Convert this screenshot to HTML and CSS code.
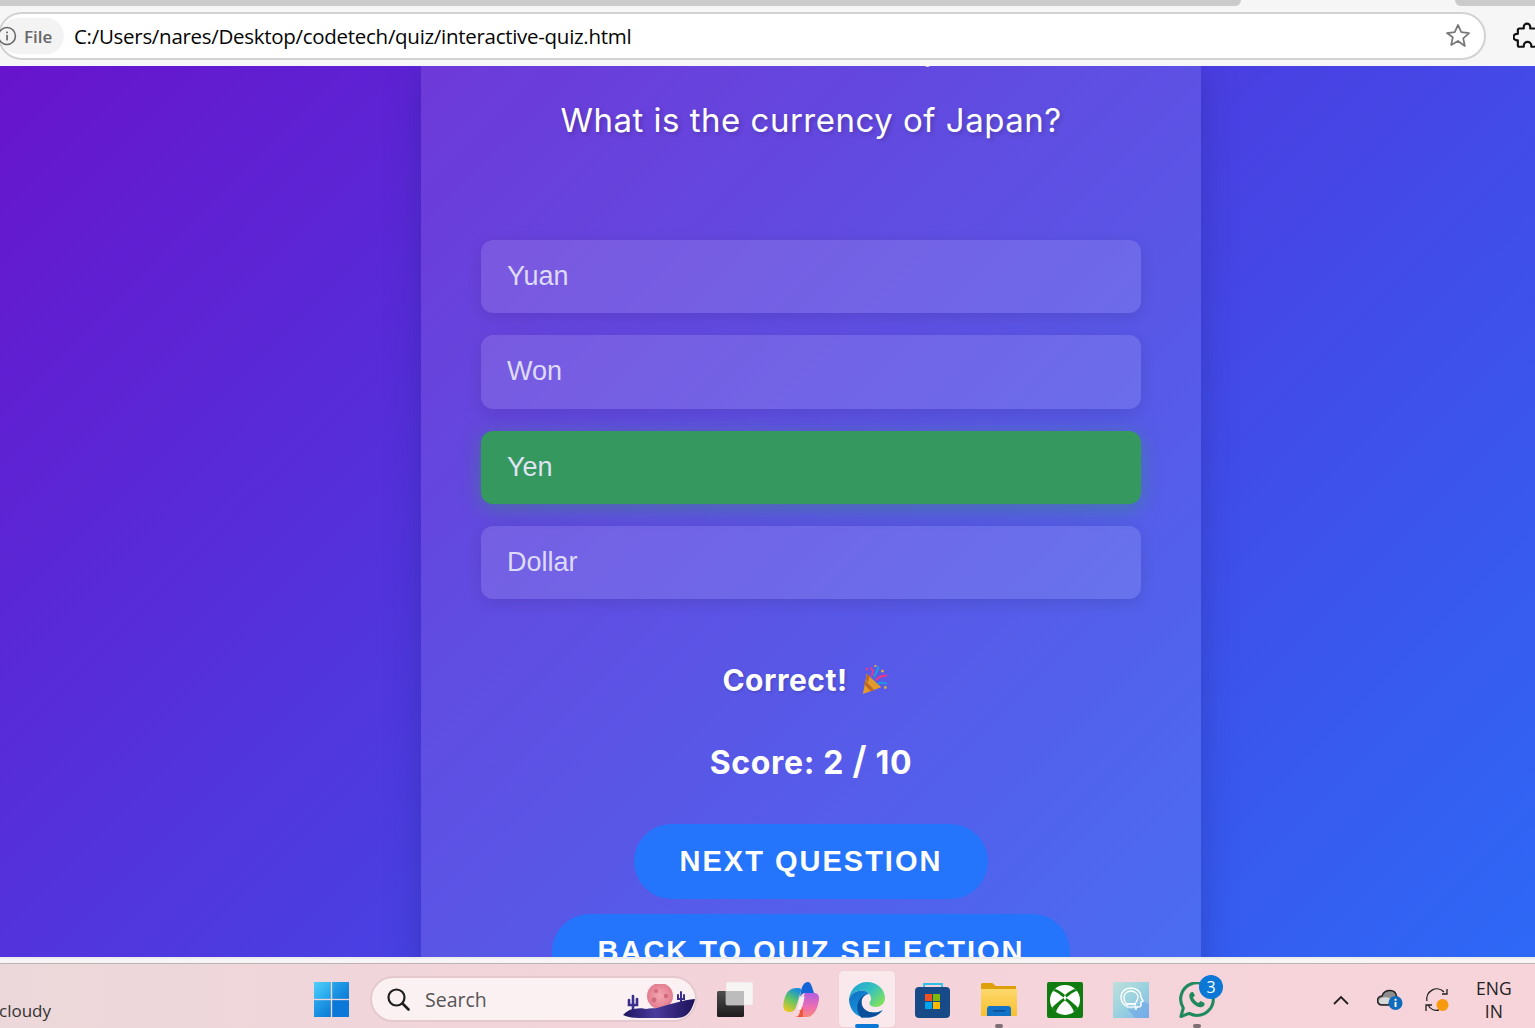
FILE: index.html
```html
<!DOCTYPE html>
<html lang="en">
<head>
<meta charset="utf-8">
<title>Interactive Quiz</title>
<link rel="stylesheet" href="styles.css">
</head>
<body>
<div class="screen">
  <header class="browser">
    <div class="tabstrip"><span class="tab-a"></span><span class="tab-b"></span></div>
    <div class="toolbar">
      <div class="omnibox">
        <div class="chip">
          <svg class="info" viewBox="0 0 18 18"><circle cx="9" cy="9" r="7.6" fill="none" stroke="#666" stroke-width="1.4"/><rect x="8.3" y="8" width="1.5" height="5" fill="#666"/><rect x="8.3" y="5" width="1.5" height="1.6" fill="#666"/></svg>
          <span class="chip-text">File</span>
        </div>
        <span class="url">C:/Users/nares/Desktop/codetech/quiz/interactive-quiz.html</span>
        <svg class="star" viewBox="0 0 24 24"><path d="M12 1.8l3 6.7 7.2.8-5.4 4.8 1.5 7.1L12 16.6l-6.3 3.6 1.5-7.1L1.8 9.300l7.200-.8z" fill="none" stroke="#777" stroke-width="1.600" stroke-linejoin="round"/></svg>
      </div>
      <svg class="puzzle" viewBox="0 0 26 26"><path d="M10 4.500a3 3 0 0 1 6 0V6h5a1.500 1.500 0 0 1 1.500 1.500V11H24a3 3 0 0 1 0 6h-1.500v4.500A1.500 1.500 0 0 1 21 23h-4v-1a3.500 3.500 0 0 0-7 0v1H6a1.500 1.500 0 0 1-1.500-1.500V17H3.500a3 3 0 0 1 0-6h1V7.500A1.500 1.500 0 0 1 6 6h4z" fill="none" stroke="#111" stroke-width="2" stroke-linejoin="round"/></svg>
    </div>
  </header>

  <main class="page">
    <section class="card">
      <span class="clipped-mark"></span>
      <h2 class="question">What is the currency of Japan?</h2>
      <div class="options">
        <div class="option">Yuan</div>
        <div class="option">Won</div>
        <div class="option option-correct">Yen</div>
        <div class="option">Dollar</div>
      </div>
      <p class="feedback">Correct!
        <svg class="popper" viewBox="0 0 30 30">
          <path d="M7 9l15 14L3 30z" fill="#e39a2c"/>
          <path d="M5.500 16l9.500 10-3.500 1.400-7.300-7.400zM7 9l3 3-2 6-2-3z" fill="#b96a2a"/>
          <path d="M12 11c2-3 1-6-.5-8" fill="none" stroke="#e8388f" stroke-width="2" stroke-linecap="round"/>
          <path d="M15 12c1-4 3-5 4-10" fill="none" stroke="#1e9be0" stroke-width="2.200" stroke-linecap="round"/>
          <path d="M17 15c3-3 6-4 10-4" fill="none" stroke="#e8388f" stroke-width="2.200" stroke-linecap="round"/>
          <path d="M19 19c3-1 5-1 8 0" fill="none" stroke="#1e9be0" stroke-width="2" stroke-linecap="round"/>
          <rect x="6" y="3" width="2.500" height="2.500" fill="#e8388f"/><rect x="22" y="5" width="2.500" height="2.500" fill="#e9b02c"/><rect x="25" y="22" width="2.500" height="2.500" fill="#e9b02c"/><rect x="15" y="0" width="2" height="2" fill="#e9b02c"/>
        </svg>
      </p>
      <p class="score">Score: 2 <span class="slash">/</span> 10</p>
      <button class="action action-next">NEXT QUESTION</button>
      <button class="action action-back">BACK TO QUIZ SELECTION</button>
    </section>
  </main>

  <div class="strip"></div>

  <footer class="taskbar">
    <span class="weather">cloudy</span>
    <svg class="winlogo" viewBox="0 0 36 36">
      <defs>
        <linearGradient id="wa" x1="0" y1="0" x2="1" y2="1"><stop offset="0" stop-color="#52cffb"/><stop offset="1" stop-color="#1d9fe8"/></linearGradient>
        <linearGradient id="wb" x1="0" y1="0" x2="1" y2="1"><stop offset="0" stop-color="#2aa6ec"/><stop offset="1" stop-color="#0a7ad6"/></linearGradient>
      </defs>
      <rect width="17.300" height="17.300" fill="url(#wa)"/><rect x="18.700" width="17.300" height="17.300" fill="url(#wb)"/><rect y="18.700" width="17.300" height="17.300" fill="url(#wb)"/><rect x="18.700" y="18.700" width="17.300" height="17.300" fill="#0a78d8"/>
    </svg>
    <div class="search">
      <svg class="lens" viewBox="0 0 24 24"><circle cx="10.500" cy="10.500" r="8" fill="none" stroke="#1f1f1f" stroke-width="2.200"/><path d="M16.500 16.500l6 6" stroke="#1f1f1f" stroke-width="2.600" stroke-linecap="round"/></svg>
      <span class="search-text">Search</span>
      <svg class="search-art" viewBox="0 0 76 38">
        <defs><linearGradient id="hill" x1="0" y1="0" x2="1" y2="0"><stop offset="0" stop-color="#1e1660"/><stop offset=".45" stop-color="#4a3a9c"/><stop offset="1" stop-color="#1c1258"/></linearGradient>
        <radialGradient id="moon"><stop offset="0" stop-color="#f4a8b2"/><stop offset="1" stop-color="#e27c8e"/></radialGradient></defs>
        <circle cx="39" cy="12" r="13" fill="url(#moon)"/>
        <circle cx="35" cy="7" r="2" fill="#cf6b80"/><circle cx="45" cy="12" r="2.200" fill="#cf6b80"/><circle cx="33" cy="16" r="2.400" fill="#cf6b80"/>
        <path d="M12 26V12M8 16v5h8v-6" fill="none" stroke="#3a2e8c" stroke-width="2.600" stroke-linecap="round"/>
        <path d="M60 8v10M57 11v4h6v-4" fill="none" stroke="#3a2e8c" stroke-width="2" stroke-linecap="round"/>
        <path d="M2 31c3-3 7-6 11-6 4-1 9-1 12 0 4-1 8-.5 11-1 14-4 26-8 38-9-2 8-5 14-10 17-2 1-5 2-9 2H18c-7 0-12-1-16-3z" fill="url(#hill)"/>
      </svg>
    </div>
    <div class="apps">
      <div class="app">
        <svg viewBox="0 0 36 36"><defs><linearGradient id="tv" x1="0" y1="0" x2="0" y2="1"><stop offset="0" stop-color="#4e4e4e"/><stop offset="1" stop-color="#1c1c1c"/></linearGradient></defs><rect x="0" y="9" width="27" height="26" rx="1.500" fill="url(#tv)"/><rect x="9" y="0" width="27" height="23" rx="1.500" fill="#f7f4f4" stroke="#eadfe0" stroke-width=".6"/><rect x="9" y="9" width="18" height="14" fill="#bdbcbc"/></svg>
      </div>
      <div class="app">
        <svg viewBox="0 0 36 36"><defs>
          <linearGradient id="ca" x1=".6" y1="0" x2=".2" y2="1"><stop offset="0" stop-color="#1a8fd8"/><stop offset=".45" stop-color="#5cc46a"/><stop offset="1" stop-color="#f2c81c"/></linearGradient>
          <linearGradient id="cb" x1=".5" y1="0" x2=".5" y2="1"><stop offset="0" stop-color="#b35ee0"/><stop offset=".6" stop-color="#ee6fb0"/><stop offset="1" stop-color="#f58a7a"/></linearGradient>
        </defs>
          <path d="M18 9C19 4 21 0 25 0c2 0 3 2 4 5l2 6h-9c-2 0-4 2-5 4z" fill="#1565d8"/>
          <path d="M14 6C8 6 4 9 2 15c-2 6-2 10-1 12 1 3 4 3 6 3 3 0 5-2 6-5l5-16c1-3-2-3-4-3z" fill="url(#ca)"/>
          <path d="M22 11h9c3 0 5 2 5 5 0 6-3 14-7 17-2 2-4 2-7 2H12c3 0 5-2 6-5l3-12c.5-4 0-7 1-7z" fill="url(#cb)"/>
          <path d="M15 23c3 0 5 2 5 5v7h-8c3 0 4-2 5-5z" fill="#f0573c"/>
          <path d="M17 15h4.500L18 28h-4z" fill="#fbeef0"/>
        </svg>
      </div>
      <div class="app app-active">
        <svg viewBox="0 0 36 36"><defs>
          <linearGradient id="ea" x1="0" y1="0" x2="1" y2=".7"><stop offset="0" stop-color="#1c9fd8"/><stop offset=".55" stop-color="#35c1c0"/><stop offset="1" stop-color="#7fe05e"/></linearGradient>
          <linearGradient id="eb" x1="0" y1="0" x2=".6" y2="1"><stop offset="0" stop-color="#0f6fc4"/><stop offset="1" stop-color="#1b9de2"/></linearGradient>
        </defs>
          <path d="M0 17C1 7 9 0 18 0c10 0 18 7 18 16 0 6-5 9-9 9-3 0-6-1-6.500-3-.3-2 1.500-2.500 1.500-5.500 0-4-4-8-9-8C7 8.500 2 12 0 17z" fill="url(#ea)"/>
          <path d="M0 17c2-5 7-8.500 13-8.500 3 0 5.500 1.500 7 3.500-4 .5-7.500 3.500-7.500 8 0 6 5 10.500 12 10.500 3.500 0 6.500-.5 9-2.500-3 5-9 7.500-16 7.500C7 36 0 27 0 17z" fill="url(#eb)"/>
          <path d="M13 36c-6-5-6-14-2-19 1-2 4-4.500 9-5-4 .5-7.500 3.500-7.500 8 0 6 5 10.500 12 10.500 3.500 0 6.500-.5 9-2.500-3 5-9 7.500-16 7.500-1.600 0-3-.2-4.500.5z" fill="#0b4f9c"/>
        </svg>
        <span class="active-bar"></span>
      </div>
      <div class="app">
        <svg viewBox="0 0 36 36"><path d="M9 8V2h18v6" fill="none" stroke="#2fc0e8" stroke-width="1.800"/><rect x="0" y="5" width="35" height="31" rx="4" fill="#174a86"/><rect x="10" y="12" width="7" height="7" fill="#f25022"/><rect x="18" y="12" width="7" height="7" fill="#7fba00"/><rect x="10" y="20" width="7" height="7" fill="#00a4ef"/><rect x="18" y="20" width="7" height="7" fill="#ffb900"/></svg>
      </div>
      <div class="app">
        <svg viewBox="0 0 36 36"><defs><linearGradient id="fo" x1="0" y1="0" x2="0" y2="1"><stop offset="0" stop-color="#fcd86c"/><stop offset="1" stop-color="#f8bf2c"/></linearGradient></defs><path d="M0 2.500C0 1.500 1 1 2 1h9c1 0 3 3 4 3h20v3H0z" fill="#dd9f0a"/><path d="M0 7h36v27H0z" fill="url(#fo)"/><path d="M6 34v-7c0-2 1-3 3-3h18c2 0 3 1 3 3v7z" fill="#1173c8"/><rect x="12" y="28" width="12" height="1.600" fill="#0b4f94"/></svg>
        <span class="running-dot"></span>
      </div>
      <div class="app">
        <svg viewBox="0 0 36 36">
          <rect width="36" height="36" rx="2" fill="#107c10"/>
          <circle cx="18" cy="18" r="15" fill="#fff"/>
          <g fill="#107c10">
            <path d="M18 13C15 10.500 11 7.500 8 7L6 9C9 9 13 13 16.500 15.500z"/>
            <path d="M16.500 16C11 20 7 23 5 26L9 30.500C10 26 14 21 18 18.500z"/>
          </g>
          <g fill="#107c10" transform="translate(36 0) scale(-1 1)">
            <path d="M18 13C15 10.500 11 7.500 8 7L6 9C9 9 13 13 16.500 15.500z"/>
            <path d="M16.500 16C11 20 7 23 5 26L9 30.500C10 26 14 21 18 18.500z"/>
          </g>
        </svg>
      </div>
      <div class="app">
        <svg viewBox="0 0 36 36"><defs><linearGradient id="gh" x1="0" y1="0" x2="1" y2="1"><stop offset="0" stop-color="#bfe0dc"/><stop offset=".5" stop-color="#9ad2df"/><stop offset="1" stop-color="#7fb6ec"/></linearGradient></defs><rect width="36" height="36" fill="url(#gh)"/><path d="M14 27l9 9h13V22l-7-3-6 9z" fill="#6fa7e6" opacity=".6"/><path d="M13 24c-3-2-5-5-5-9 0-5 4-9 10-9s10 4 10 9c0 1 2 3 2 4l-2 1v3c0 1-1 2-3 2h-2v3" fill="none" stroke="#fff" stroke-width="1.500"/><path d="M14 22c-2-1-3-4-3-7 0-3 3-6 7-6s7 3 7 6-2 5-3 7z" fill="none" stroke="#fff" stroke-width="1.300"/><rect x="14" y="22" width="8" height="3" fill="none" stroke="#fff" stroke-width="1.200"/></svg>
      </div>
      <div class="app">
        <svg viewBox="0 0 36 36"><path d="M1.500 36l2.400-8.700A16.800 16.800 0 1 1 18 35a16.800 16.800 0 0 1-8-2.100z" transform="translate(.5 -.500) scale(.97)" fill="none" stroke="#1f8a5d" stroke-width="3.200" stroke-linejoin="round"/><path d="M13 10c-1 0-2 1-2.500 2.500-.8 2.500.5 6 3.500 9s6.500 4.300 9 3.500c1.500-.5 2.500-1.500 2.500-2.500v-1.500l-4-2-2 2c-2-.5-4.500-3-5.500-5.500l2-2-2-3.500z" fill="#1f8a5d"/></svg>
        <span class="badge">3</span>
        <span class="running-dot"></span>
      </div>
    </div>
    <div class="tray">
      <svg class="chevron" viewBox="0 0 16 10"><path d="M1 9l7-7 7 7" fill="none" stroke="#222" stroke-width="1.800"/></svg>
      <svg class="cloud" viewBox="0 0 26 22"><path d="M5 16c-3 0-4.500-2-4.500-4.500S2.500 7 5 7c1-3 4-5.500 8-5.500s6 2.500 6.500 5.500c1 2 1 4 0 6L13 16z" fill="#8d8d8d" stroke="#1f1f1f" stroke-width="1.400"/><path d="M4 9c3-1 7-1 10 1l-3 5H5C3 15 2 13 2 12s1-2 2-3z" fill="#d9d9d9"/><circle cx="18.500" cy="14" r="7" fill="#0f6cbd"/><rect x="17.600" y="13" width="1.900" height="5" fill="#fff"/><rect x="17.600" y="9.800" width="1.900" height="1.900" fill="#fff"/></svg>
      <svg class="sync" viewBox="0 0 24 26"><path d="M2 14A10 10 0 0 1 19 5M22 2v5h-5" fill="none" stroke="#1f1f1f" stroke-width="1.300"/><path d="M14 23A10 10 0 0 1 3 18M1 24v-6h6" fill="none" stroke="#1f1f1f" stroke-width="1.300"/><circle cx="17.500" cy="18" r="6" fill="#f79a0e"/></svg>
      <div class="lang"><span>ENG</span><span>IN</span></div>
    </div>
  </footer>
</div>
</body>
</html>
```

FILE: styles.css
```css
* { box-sizing: border-box; }
html, body { margin: 0; padding: 0; }
body { background: #f5f5f5; overflow: hidden; }

.screen {
  width: 1535px;
  height: 1028px;
  display: flex;
  flex-direction: column;
  overflow: hidden;
}

/* browser chrome */
.browser { height: 66px; flex: none; background: #f6f6f6; overflow: hidden; }
.tabstrip { height: 6px; position: relative; display: flex; justify-content: space-between; }
.tab-a { width: 1241px; height: 6px; background: #cbcbcb; border-bottom-right-radius: 6px; }
.tab-b { width: 80px; height: 6px; background: #cbcbcb; border-bottom-left-radius: 6px; }
.toolbar { display: flex; align-items: center; height: 48px; margin-top: 6px; width: 1560px; }
.omnibox {
  width: 1488px;
  margin-left: -2px;
  height: 48px;
  background: #fff;
  border: 2px solid #d2d2d2;
  border-radius: 24px;
  display: flex;
  align-items: center;
  padding-right: 13px;
}
.chip {
  width: 64px;
  height: 36px;
  background: #f3f3f3;
  border-radius: 18px;
  display: flex;
  align-items: center;
  flex: none;
  gap: 7px;
}
.info { width: 20px; height: 20px; margin-left: -3px; flex: none; }
.chip-text { font: 600 17px "Open Sans", sans-serif; color: #666; }
.url { font: 400 20.5px "Open Sans", sans-serif; color: #050505; margin-left: 10px; flex: 1; white-space: nowrap; letter-spacing: -0.29px; }
.star { width: 26px; height: 26px; flex: none; }
.puzzle { width: 28px; height: 28px; margin-left: 27px; flex: none; }

/* page */
.page {
  flex: none;
  height: 891px;
  background: linear-gradient(135deg, #6a11cb 0%, #2575fc 100%) 0 -100px / 100% 1360px no-repeat;
  display: flex;
  overflow: hidden;
}
.card {
  width: 780px;
  height: 1100px;
  flex: none;
  margin-left: 421px;
  padding: 30px 60px 0;
  background: rgba(255, 255, 255, 0.1);
  box-shadow: 0 8px 32px rgba(31, 38, 135, 0.37);
  display: flex;
  flex-direction: column;
  align-items: center;
  position: relative;
  font-family: Inter, sans-serif;
  color: #fff;
}
.clipped-mark { position: absolute; top: -1px; left: 504px; width: 5px; height: 2px; background: #d8d2f6; border-radius: 0 0 2px 2px; }
.question {
  margin: 0;
  font-weight: 400;
  font-size: 33px;
  letter-spacing: 0.5px;
  line-height: 48px;
  text-shadow: 2px 2px 4px rgba(0, 0, 0, 0.2);
  white-space: nowrap;
}
.options {
  width: 660px;
  margin-top: 96px;
  display: flex;
  flex-direction: column;
  gap: 22px;
  align-self: center;
}
.option {
  height: 73.3px;
  padding: 0 26px;
  display: flex;
  align-items: center;
  border-radius: 12px;
  background: rgba(255, 255, 255, 0.12);
  box-shadow: 0 4px 15px rgba(0, 0, 0, 0.1);
  font: 400 27px "Liberation Sans", Arial, sans-serif;
  color: #dedbfa;
}
.option-correct {
  background: #35985f;
  box-shadow: 0 4px 20px rgba(40, 167, 69, 0.4);
  color: #dfe3f2;
}
.feedback {
  margin: 60.8px 0 0;
  height: 40px;
  display: flex;
  align-items: center;
  gap: 12px;
  font-size: 30px;
  font-weight: 700;
  letter-spacing: 0.5px;
  text-shadow: 1px 1px 3px rgba(0, 0, 0, 0.2);
}
.popper { width: 29px; height: 29px; margin-right: 11px; }
.score {
  margin: 43px 0 0;
  height: 40px;
  line-height: 40px;
  font-size: 32px;
  font-weight: 700;
  letter-spacing: 0.65px;
}
.slash { font-size: 38px; font-weight: 600; line-height: 0; }
.action {
  flex: none;
  height: 75px;
  padding: 0 46px;
  border: 0;
  border-radius: 38px;
  background: #2575fc;
  color: #fff;
  font: 700 29px "Liberation Sans", Arial, sans-serif;
  letter-spacing: 2px;
  white-space: nowrap;
}
.action-next { margin-top: 41px; }
.action-back { margin-top: 15px; }

/* strip below the viewport */
.strip { flex: none; height: 7px; background: #f7f5f5; border-bottom: 1px solid #bdb4b5; border-top: 2px solid #ededed; }

/* taskbar */
.taskbar {
  flex: 1;
  display: flex;
  align-items: center;
  padding-top: 8px;
  background: linear-gradient(90deg, #ecd8da 0%, #f4d3da 50%, #f6d4da 100%);
  font-family: "Open Sans", sans-serif;
  color: #222;
}
.weather { width: 315px; flex: none; font-size: 17px; color: #333; margin-left: -1px; margin-top: 20px; }
.winlogo { width: 35px; height: 35px; flex: none; margin-top: -1px; }
.search {
  width: 327px;
  height: 46px;
  flex: none;
  margin-left: 21px;
  margin-top: -2px;
  border-radius: 23px;
  background: #fbf1f2;
  border: 2px solid #e6c9ce;
  display: flex;
  align-items: center;
  padding-left: 14px;
  position: relative;
}
.lens { width: 24px; height: 24px; flex: none; }
.search-text { font-size: 19.5px; color: #555; margin-left: 15px; }
.search-art { position: absolute; right: -2px; top: 6px; width: 76px; height: 38px; }
.apps { display: flex; gap: 30px; margin-left: 20px; flex: none; }
.app { width: 36px; height: 36px; position: relative; }
.app svg { width: 36px; height: 36px; display: block; position: relative; }
.app-active::before {
  content: "";
  position: absolute;
  left: -10px;
  top: -11px;
  width: 56px;
  height: 56px;
  background: #f9e9ec;
  border-radius: 4px;
  box-shadow: 0 0 1px rgba(0, 0, 0, 0.15);
}
.active-bar { position: absolute; left: 6px; top: 42px; width: 24px; height: 4px; border-radius: 2px; background: #0a78d4; }
.running-dot { position: absolute; left: 14px; top: 42px; width: 8px; height: 4px; border-radius: 2px; background: #7d6f73; }
.badge {
  position: absolute;
  left: 20px;
  top: -7px;
  width: 24px;
  height: 24px;
  border-radius: 50%;
  background: #0a78d4;
  color: #fff;
  font-size: 16px;
  line-height: 24px;
  text-align: center;
}
.tray { display: flex; align-items: center; margin-left: 118px; flex: none; position: relative; }
.chevron { width: 16px; height: 10px; }
.cloud { width: 26px; height: 22px; margin-left: 28px; }
.sync { width: 24px; height: 26px; margin-left: 22px; }
.lang { display: flex; flex-direction: column; align-items: center; margin-left: 27px; font-size: 17.5px; line-height: 23px; color: #222; }
```
